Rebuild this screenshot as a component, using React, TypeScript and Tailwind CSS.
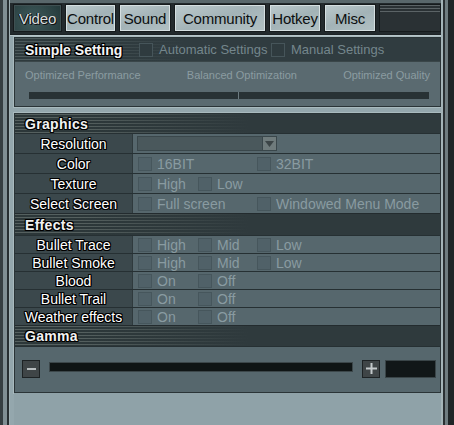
import React from 'react';

const outline =
  '[text-shadow:1px_1px_0_#000,-1px_-1px_0_#000,1px_-1px_0_#000,-1px_1px_0_#000,0_1px_0_#000,0_-1px_0_#000,1px_0_0_#000,-1px_0_0_#000]';

type Opt = { text: string; w: string };
type Row = { label: string; opts?: Opt[]; select?: boolean };

const graphicsRows: Row[] = [
  { label: 'Resolution', select: true },
  { label: 'Color', opts: [{ text: '16BIT', w: 'w-[119px]' }, { text: '32BIT', w: '' }] },
  { label: 'Texture', opts: [{ text: 'High', w: 'w-[60px]' }, { text: 'Low', w: '' }] },
  { label: 'Select Screen', opts: [{ text: 'Full screen', w: 'w-[119px]' }, { text: 'Windowed Menu Mode', w: '' }] },
];

const effectRows: Row[] = [
  { label: 'Bullet Trace', opts: [{ text: 'High', w: 'w-[60px]' }, { text: 'Mid', w: 'w-[59px]' }, { text: 'Low', w: '' }] },
  { label: 'Bullet Smoke', opts: [{ text: 'High', w: 'w-[60px]' }, { text: 'Mid', w: 'w-[59px]' }, { text: 'Low', w: '' }] },
  { label: 'Blood', opts: [{ text: 'On', w: 'w-[60px]' }, { text: 'Off', w: '' }] },
  { label: 'Bullet Trail', opts: [{ text: 'On', w: 'w-[60px]' }, { text: 'Off', w: '' }] },
  { label: 'Weather effects', opts: [{ text: 'On', w: 'w-[60px]' }, { text: 'Off', w: '' }] },
];

const tabs = [
  { name: 'Video', w: 'w-[49px]', active: true },
  { name: 'Control', w: 'w-[51px]' },
  { name: 'Sound', w: 'w-[52px]' },
  { name: 'Community', w: 'w-[92px]' },
  { name: 'Hotkey', w: 'w-[52px]' },
  { name: 'Misc', w: 'w-[52px]' },
];

const Check = ({ dark }: { dark?: boolean }) => (
  <span
    className={
      'block w-[14px] h-[14px] shrink-0 border ' +
      (dark ? 'border-[#46555a] bg-[#2f3b3f]' : 'border-[#46565c] bg-[#506168]')
    }
  />
);

const SectionHeader = ({ title, h, top }: { title: string; h: string; top?: boolean }) => (
  <div
    className={
      h +
      ' shrink-0 flex items-center pl-[10px] bg-[linear-gradient(to_right,transparent_15%,#2f3a3d_55%),repeating-linear-gradient(to_bottom,#55605f_0px,#55605f_1px,#2c3739_1px,#2c3739_3px)] ' +
      (top ? '' : 'border-t border-[#232b2e]')
    }
  >
    <span className={'text-[14px] font-bold text-[#f2f2f2] leading-none tracking-[0.3px] ' + outline}>{title}</span>
  </div>
);

const OptionRow = ({ row, h }: { row: Row; h: string }) => (
  <div className={h + ' shrink-0 flex border-t border-[#263033]'}>
    <div className="w-[118px] shrink-0 bg-[#3b484c] flex items-center justify-center border-r border-[#2f3a3d]">
      <span className={'text-[14px] text-white leading-none ' + outline}>{row.label}</span>
    </div>
    <div className="flex-1 bg-[#56676d] flex items-center pl-[5px]">
      {row.select && (
        <div className="ml-[-1px] w-[140px] h-[15px] bg-[#4a585c] border border-[#3a474b] flex justify-end">
          <div className="w-[14px] h-full bg-[#6f7b7c] border-l border-[#3a474b] flex items-center justify-center">
            <svg width="9" height="6" viewBox="0 0 9 6">
              <path d="M0 0 H9 L4.5 6 Z" fill="#3c4547" />
            </svg>
          </div>
        </div>
      )}
      {row.opts?.map((o, i) => (
        <div key={i} className={o.w + ' flex items-center gap-[5px] shrink-0'}>
          <Check />
          <span className="text-[14px] text-[#899ba1] leading-none">{o.text}</span>
        </div>
      ))}
    </div>
  </div>
);

export default function App() {
  return (
    <div className="w-[454px] h-[425px] overflow-hidden flex bg-[#90a3a9] font-['Liberation_Sans',Arial,sans-serif]">
      <div className="w-[10px] shrink-0 bg-[linear-gradient(to_right,#353e41_0px,#353e41_3px,#7f8e93_3px,#7f8e93_7px,#262e31_7px,#262e31_9px,#a0b0b4_9px)]" />

      <div className="flex-1 flex flex-col bg-[#94a7ad]">
        <div className="h-[3px] shrink-0 bg-[#59676b]" />
        <div className="h-[31px] shrink-0 bg-[#232a2d] flex items-start pt-[1px] pl-[3px] gap-[3px]">
          {tabs.map((t) => (
            <div
              key={t.name}
              className={
                t.w +
                ' h-[28px] flex items-center justify-center border border-[#161b1d] ' +
                (t.active
                  ? 'bg-[radial-gradient(circle_at_40%_60%,#3f5a5b,#24393a)] shadow-[inset_0_0_0_1px_#3f5052]'
                  : 'bg-[linear-gradient(160deg,#bccacd,#a3b3b7_50%,#b2c1c4)] shadow-[inset_0_0_0_1px_#d5dfe1]')
              }
            >
              <span
                className={
                  'text-[15px] leading-none tracking-[-0.2px] ' +
                  (t.active ? 'text-[#d9dddd] [text-shadow:1px_1px_0_#111,-1px_0_0_#111]' : 'text-[#0c0f10]')
                }
              >
                {t.name}
              </span>
            </div>
          ))}
          <div className="flex-1 h-[28px] border border-[#161b1d] bg-[linear-gradient(to_bottom,transparent_0px,transparent_8px,#2a3134_8px),repeating-linear-gradient(to_bottom,#5b6366_0px,#5b6366_1px,#2a3134_1px,#2a3134_3px)]" />
        </div>
        <div className="h-[1px] shrink-0 bg-[#1c2225]" />
        <div className="h-[1px] shrink-0 bg-[#b6c5c9]" />

        <div className="pl-[4px] flex flex-col">
          <div className="mt-[1px] h-[70px] shrink-0 flex flex-col border border-[#2a3437] shadow-[0_0_0_1px_#a9babe]">
            <div className="h-[23px] shrink-0 flex items-center bg-[linear-gradient(to_right,transparent_10%,#303c40_40%),repeating-linear-gradient(to_bottom,#4d5a5c_0px,#4d5a5c_1px,#2e3a3d_1px,#2e3a3d_3px)]">
              <span className={'w-[124px] pl-[10px] text-[14px] font-bold text-[#f4f4f4] leading-none ' + outline}>
                Simple Setting
              </span>
              <div className="w-[132px] flex items-center gap-[6px]">
                <Check dark />
                <span className="text-[13px] text-[#74868c] leading-none">Automatic Settings</span>
              </div>
              <div className="flex items-center gap-[6px]">
                <Check dark />
                <span className="text-[13px] text-[#74868c] leading-none">Manual Settings</span>
              </div>
            </div>
            <div className="flex-1 bg-[#5a6a70] flex flex-col border-t border-[#3a4649]">
              <div className="flex justify-between px-[10px] pt-[8px] text-[11px] leading-none text-[#8b9ca1]">
                <span>Optimized Performance</span>
                <span>Balanced Optimization</span>
                <span>Optimized Quality</span>
              </div>
              <div className="relative mt-[11px] ml-[14px] mr-[11px] h-[7px] bg-[#283235]">
                <div className="absolute left-[209px] top-0 w-[1px] h-full bg-[#6c7b80]" />
              </div>
            </div>
          </div>

          <div className="mt-[6px] h-[280px] shrink-0 flex flex-col border border-[#2a3437] shadow-[0_0_0_1px_#a9babe]">
            <SectionHeader title="Graphics" h="h-[19px]" top />
            {graphicsRows.map((r) => (
              <OptionRow key={r.label} row={r} h="h-[20px]" />
            ))}
            <SectionHeader title="Effects" h="h-[22px]" />
            {effectRows.map((r) => (
              <OptionRow key={r.label} row={r} h="h-[18px]" />
            ))}
            <SectionHeader title="Gamma" h="h-[21px]" />
            <div className="flex-1 bg-[#56676d] border-t border-[#263033] flex items-center pl-[7px] pr-[3px] pb-[2px]">
              <div className="w-[18px] h-[18px] bg-[#3f4547] border border-[#1d2224] flex items-center justify-center">
                <span className="block w-[9px] h-[2px] bg-[#b7bdbf]" />
              </div>
              <div className="ml-[9px] w-[304px] h-[10px] bg-[#0f1515] border border-[#3c474a] mb-[3px]" />
              <div className="ml-[9px] w-[18px] h-[18px] bg-[#3f4547] border border-[#1d2224] flex items-center justify-center">
                <svg width="11" height="11" viewBox="0 0 11 11">
                  <rect x="4.5" y="0" width="2" height="11" fill="#c3c9cb" />
                  <rect x="0" y="4.5" width="11" height="2" fill="#c3c9cb" />
                </svg>
              </div>
              <div className="ml-[5px] w-[51px] h-[18px] bg-[#111718] border border-[#3a4548]" />
            </div>
          </div>
          <div className="h-[32px] shrink-0 bg-[#8fa2a8]" />
        </div>
      </div>

      <div className="w-[13px] shrink-0 bg-[linear-gradient(to_right,#a4b4b8_0px,#a4b4b8_2px,#2a3033_2px,#2a3033_4px,#6f7c80_4px,#6f7c80_7px,#1f2527_7px)]" />
    </div>
  );
}
